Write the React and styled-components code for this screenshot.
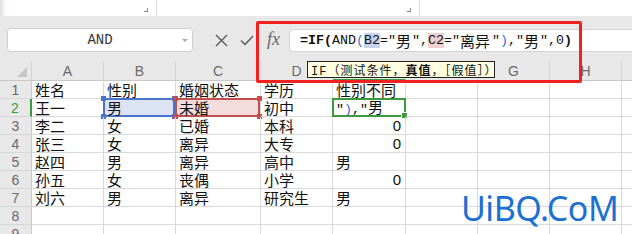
import React from "react";
import styled, { createGlobalStyle } from "styled-components";

const GlobalStyle = createGlobalStyle`
  html, body { margin: 0; padding: 0; background: #fff; }
  body { font-family: "Noto Sans CJK SC", sans-serif; }
`;

const COLS = [
  { key: "A", w: 72 },
  { key: "B", w: 72 },
  { key: "C", w: 85 },
  { key: "D", w: 72 },
  { key: "E", w: 73 },
  { key: "F", w: 72 },
  { key: "G", w: 72 },
  { key: "H", w: 72 },
  { key: "I", w: 72 },
];

const ROWS = [
  ["姓名", "性别", "婚姻状态", "学历", "性别不同"],
  ["王一", "男", "未婚", "初中", null],
  ["李二", "女", "已婚", "本科", 0],
  ["张三", "女", "离异", "大专", 0],
  ["赵四", "男", "离异", "高中", "男"],
  ["孙五", "女", "丧偶", "小学", 0],
  ["刘六", "男", "离异", "研究生", "男"],
  ["", "", "", "", ""],
  ["", "", "", "", ""],
];

const App = () => {
  return (
    <Page>
      <GlobalStyle />
      <TopStrip>
        <StripPane $w={157}>
          <CornerMark />
        </StripPane>
        <StripPane $w={263}>
          <CornerMark />
        </StripPane>
      </TopStrip>

      <FormulaBar>
        <NameBox>
          AND
          <DropArrow />
        </NameBox>
        <BarIcon $ml={22}>
          <svg width="13" height="13" viewBox="0 0 13 13">
            <path d="M1 1 L12 12 M12 1 L1 12" stroke="#555" strokeWidth="1.3" fill="none" />
          </svg>
        </BarIcon>
        <BarIcon $ml={12}>
          <svg width="14" height="11" viewBox="0 0 14 11">
            <path d="M1 5.5 L5 9.5 L13 1" stroke="#555" strokeWidth="1.4" fill="none" />
          </svg>
        </BarIcon>
        <Fx>fx</Fx>
        <FormulaInput>
          <Bold>=IF(</Bold>AND<Blue>(</Blue>
          <RefB>B2</RefB>=″<Cjk>男</Cjk>″,<RefC>C2</RefC>=″<Cjk>离异</Cjk>″
          <Blue>)</Blue>,″<Cjk>男</Cjk>″,0<Bold>)</Bold>
        </FormulaInput>
      </FormulaBar>

      <Sheet>
        <Corner>
          <Triangle />
        </Corner>
        {COLS.map((c) => (
          <ColHead key={c.key} $active={c.key === "E"}>
            {c.key}
          </ColHead>
        ))}
        {ROWS.map((row, r) => (
          <React.Fragment key={r}>
            <RowHead $active={r === 1}>{r + 1}</RowHead>
            {COLS.map((c, ci) => {
              const v = row[ci];
              if (r === 1 && (c.key === "B" || c.key === "C")) {
                const tone = c.key === "B" ? "blue" : "red";
                return (
                  <Cell key={c.key}>
                    <RefBox $tone={tone}>
                      <Handle $tone={tone} $pos="tl" />
                      <Handle $tone={tone} $pos="tr" />
                      <Handle $tone={tone} $pos="bl" />
                      <Handle $tone={tone} $pos="br" />
                    </RefBox>
                    <CellText>{v}</CellText>
                  </Cell>
                );
              }
              if (r === 1 && c.key === "E")
                return (
                  <Cell key={c.key}>
                    <ActiveBox>
                      <FillHandle />
                    </ActiveBox>
                    <CellText>
                      <Mono>″<Blue>)</Blue>,″</Mono>男
                    </CellText>
                  </Cell>
                );
              const isNum = typeof v === "number";
              return (
                <Cell key={c.key} $num={isNum}>
                  {v !== undefined && v !== null && (
                    <CellText $num={isNum}>{v}</CellText>
                  )}
                </Cell>
              );
            })}
          </React.Fragment>
        ))}
      </Sheet>

      <Highlight />
      <Tooltip>
        IF（测试条件，<b>真值</b>，［假值］）
      </Tooltip>
      <Watermark>UiBQ.CoM</Watermark>
    </Page>
  );
};

const Page = styled.div`
  position: relative;
  width: 632px;
  height: 234px;
  overflow: hidden;
  background: #e8e8e8;
`;

const TopStrip = styled.div`
  display: flex;
  height: 16px;
  background: linear-gradient(to right, #dcdcdc 0, #fafafa 5px, #fff 10px);
`;

const StripPane = styled.div`
  position: relative;
  width: ${(p) => p.$w}px;
  height: 100%;
  border-right: 1px solid #e2e2e2;
  box-sizing: border-box;
`;

const CornerMark = styled.div`
  position: absolute;
  right: 8px;
  top: 8px;
  width: 3px;
  height: 3px;
  border-right: 1px solid #8a8a8a;
  border-bottom: 1px solid #8a8a8a;
`;

const FormulaBar = styled.div`
  display: flex;
  align-items: flex-start;
  height: 45px;
  box-sizing: border-box;
  padding: 12px 0 0 7px;
  background: #e8e8e8;
`;

const NameBox = styled.div`
  position: relative;
  width: 186px;
  height: 24px;
  box-sizing: border-box;
  background: #fff;
  border: 1px solid #cfcfcf;
  border-radius: 4px;
  display: flex;
  align-items: center;
  justify-content: center;
  font-family: "Liberation Mono", monospace;
  font-size: 14px;
  color: #333;
`;

const DropArrow = styled.span`
  position: absolute;
  right: 4px;
  top: 10px;
  border-left: 3px solid transparent;
  border-right: 3px solid transparent;
  border-top: 3px solid #aaa;
`;

const BarIcon = styled.span`
  display: flex;
  align-items: center;
  height: 24px;
  margin-left: ${(p) => p.$ml}px;
`;

const Fx = styled.span`
  margin-left: 13px;
  height: 24px;
  line-height: 22px;
  font-family: "Liberation Serif", serif;
  font-style: italic;
  font-size: 18px;
  color: #666;
`;

const FormulaInput = styled.div`
  margin-left: 9px;
  margin-top: 1px;
  flex: 1;
  height: 23px;
  box-sizing: border-box;
  background: #fff;
  border: 1px solid #d4d4d4;
  border-right: none;
  border-radius: 4px 0 0 4px;
  padding-left: 10px;
  display: flex;
  align-items: center;
  white-space: pre;
  font-family: "Liberation Mono", "DejaVu Sans Mono", monospace;
  font-size: 13.33px;
  color: #111;
`;

const Bold = styled.b`
  font-weight: 700;
`;

const Blue = styled.span`
  color: #3b6fd1;
`;

const RefB = styled.span`
  background: #c7d4ee;
`;

const RefC = styled.span`
  background: #efcfcf;
`;

const Cjk = styled.span`
  font-family: "Noto Sans CJK SC", sans-serif;
  font-size: 15px;
  display: inline-block;
  width: ${(p) => (p.children && p.children.length ? p.children.length * 16 : 16)}px;
  line-height: 1;
`;

const Mono = styled.span`
  font-family: "Liberation Mono", "DejaVu Sans Mono", monospace;
  font-size: 13.33px;
`;

const Sheet = styled.div`
  display: grid;
  grid-template-columns: 32px ${COLS.map((c) => c.w + "px").join(" ")};
  grid-template-rows: 20px repeat(${ROWS.length}, 18px);
  background: #fff;
`;

const Corner = styled.div`
  background: #e8e8e8;
  border-right: 1px solid #d2d2d2;
  border-bottom: 1px solid #c9c9c9;
  position: relative;
`;

const Triangle = styled.div`
  position: absolute;
  right: 4px;
  bottom: 3px;
  width: 0;
  height: 0;
  border-left: 10px solid transparent;
  border-bottom: 10px solid #c6c6c6;
`;

const ColHead = styled.div`
  background: #e8e8e8;
  border-right: 1px solid #d6d6d6;
  border-bottom: ${(p) => (p.$active ? "2px solid #3c9a3c" : "1px solid #c9c9c9")};
  box-sizing: border-box;
  display: flex;
  align-items: center;
  justify-content: center;
  font-family: "Liberation Sans", sans-serif;
  font-size: 14px;
  color: #6a6a6a;
`;

const RowHead = styled.div`
  background: #e8e8e8;
  border-right: ${(p) => (p.$active ? "2px solid #3c9a3c" : "1px solid #c9c9c9")};
  border-bottom: 1px solid #d6d6d6;
  box-sizing: border-box;
  display: flex;
  align-items: center;
  justify-content: center;
  font-family: "Liberation Sans", sans-serif;
  font-size: 14px;
  color: ${(p) => (p.$active ? "#3c9a3c" : "#6a6a6a")};
`;

const Cell = styled.div`
  position: relative;
  border-right: 1px solid #d9d9d9;
  border-bottom: 1px solid #d9d9d9;
  box-sizing: border-box;
  display: flex;
  align-items: center;
  justify-content: ${(p) => (p.$num ? "flex-end" : "flex-start")};
  padding: 0 4px 0 3px;
  white-space: nowrap;
`;

const CellText = styled.span`
  position: relative;
  font-family: ${(p) => (p.$num ? '"Liberation Sans", sans-serif' : '"Noto Sans CJK SC", sans-serif')};
  font-size: 15px;
  line-height: 17px;
  color: #111;
`;

const RefBox = styled.div`
  position: absolute;
  left: -1px;
  top: -1px;
  right: 0;
  bottom: -1px;
  border: 2px solid ${(p) => (p.$tone === "blue" ? "#4a74c9" : "#c0504d")};
  background: ${(p) => (p.$tone === "blue" ? "#dbe3f5" : "#f3dcdb")};
`;

const Handle = styled.span`
  position: absolute;
  width: 5px;
  height: 5px;
  background: ${(p) => (p.$tone === "blue" ? "#4a74c9" : "#c0504d")};
  ${(p) => (p.$pos[0] === "t" ? "top: -4px;" : "bottom: -4px;")}
  ${(p) => (p.$pos[1] === "l" ? "left: -4px;" : "right: -4px;")}
`;

const ActiveBox = styled.div`
  position: absolute;
  left: -1px;
  top: -1px;
  right: -1px;
  bottom: -1px;
  border: 2px solid #3c9a3c;
`;

const FillHandle = styled.span`
  position: absolute;
  right: -4px;
  bottom: -4px;
  width: 5px;
  height: 5px;
  background: #3c9a3c;
  border: 1px solid #fff;
`;

const Highlight = styled.div`
  position: absolute;
  left: 256px;
  top: 21px;
  width: 326px;
  height: 62px;
  box-sizing: border-box;
  border: 3px solid #f0211f;
  border-radius: 2px;
`;

const Tooltip = styled.div`
  position: absolute;
  left: 307px;
  top: 61px;
  width: 188px;
  height: 17px;
  box-sizing: border-box;
  padding: 0 3px;
  background: #ffffe1;
  border: 1px solid #222;
  display: flex;
  align-items: center;
  justify-content: space-between;
  font-family: "Liberation Mono", "Noto Sans CJK SC", monospace;
  font-size: 12px;
  letter-spacing: 1px;
  color: #111;
  white-space: nowrap;
  b {
    font-weight: 700;
  }
`;

const Watermark = styled.div`
  position: absolute;
  left: 461px;
  top: 186px;
  font-family: "Noto Sans", sans-serif;
  font-size: 34px;
  line-height: 44px;
  letter-spacing: -0.5px;
  color: #1c6fd4;
`;

export default App;
